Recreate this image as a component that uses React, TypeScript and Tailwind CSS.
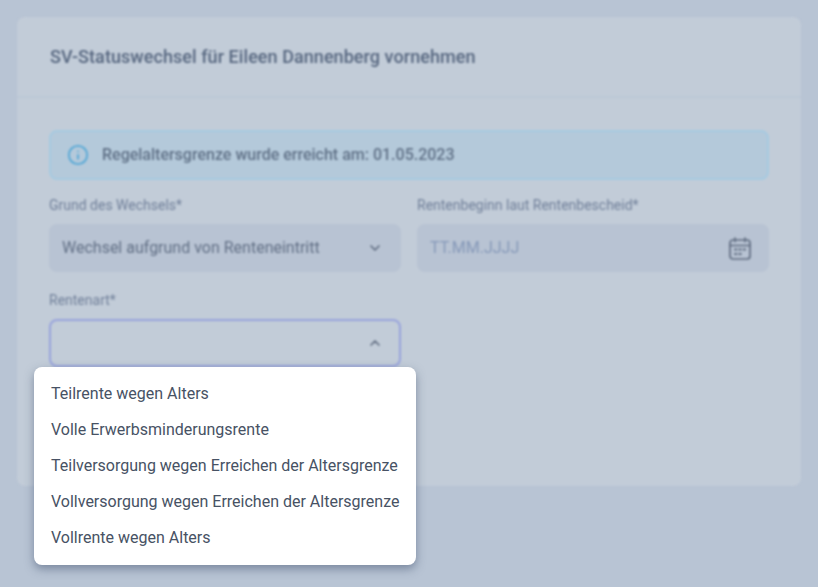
import { ChevronDown, ChevronUp, Info } from 'lucide-react';

const options = [
  'Teilrente wegen Alters',
  'Volle Erwerbsminderungsrente',
  'Teilversorgung wegen Erreichen der Altersgrenze',
  'Vollversorgung wegen Erreichen der Altersgrenze',
  'Vollrente wegen Alters',
];

function CalendarIcon() {
  return (
    <svg viewBox="0 0 22 23" className="h-[23px] w-[22px] text-[#5f6c80]" fill="none" stroke="currentColor" strokeWidth="1.7" strokeLinecap="round">
      <rect x="1" y="3" width="20" height="19" rx="3" />
      <path d="M1 8.5h20M6 1v3.5M16 1v3.5" />
      <path d="M6 12.5h1.5M10.3 12.5h1.5M14.6 12.5h1.5M6 17h1.5M10.3 17h1.5" strokeWidth="2" />
    </svg>
  );
}

export default function App() {
  return (
    <div className="relative h-[587px] w-[818px] overflow-hidden bg-[#b8c4d4] font-['Roboto',sans-serif]">
      {/* blurred page behind the open menu */}
      <div className="h-full w-full p-[17px] blur-[1.2px]">
        <div className="h-[469px] rounded-lg bg-[#c2ccd8]">
          <div className="flex h-[81px] items-center border-b-2 border-[#bcc8d6] px-[33px]">
            <h1 className="text-lg font-medium tracking-[0.06px] text-[#56667f]">
              SV-Statuswechsel für Eileen Dannenberg vornehmen
            </h1>
          </div>

          <div className="px-[32px] pt-[32px]">
            <div className="flex h-[50px] w-[720px] items-center gap-[13px] rounded-lg border-2 border-[#a6cae1] bg-[#b4c9da] pl-[16px]">
              <Info className="h-[22px] w-[22px] text-[#55a8d6]" strokeWidth={2} />
              <span className="text-base font-medium text-[#5f7086]">
                Regelaltersgrenze wurde erreicht am: 01.05.2023
              </span>
            </div>

            <div className="mt-4 grid w-[720px] grid-cols-2 gap-x-4">
              <div>
                <label className="block h-[20px] text-sm leading-[18px] text-[#71809a]">Grund des Wechsels*</label>
                <div className="mt-[8px] flex h-[48px] items-center justify-between rounded-lg bg-[#b8c3d3] pl-[13px] pr-[18px]">
                  <span className="text-base text-[#616f85]">Wechsel aufgrund von Renteneintritt</span>
                  <ChevronDown className="h-4 w-4 text-[#5f6c80]" strokeWidth={2.5} />
                </div>
              </div>
              <div>
                <label className="block h-[20px] text-sm leading-[18px] text-[#71809a]">Rentenbeginn laut Rentenbescheid*</label>
                <div className="mt-[8px] flex h-[48px] items-center justify-between rounded-lg bg-[#b8c3d3] pl-[13px] pr-[18px]">
                  <span className="text-base text-[#8598b8]">TT.MM.JJJJ</span>
                  <CalendarIcon />
                </div>
              </div>
              <div className="mt-[19px]">
                <label className="block h-[20px] text-sm leading-[18px] text-[#71809a]">Rentenart*</label>
                <div className="mt-[8px] flex h-[48px] items-center justify-end rounded-lg border-2 border-[#98a3dc] pr-[16px]">
                  <ChevronUp className="h-4 w-4 text-[#5f6c80]" strokeWidth={2.5} />
                </div>
              </div>
            </div>
          </div>
        </div>
      </div>

      {/* open select menu */}
      <ul className="absolute left-[34px] top-[367px] flex h-[198px] w-[382px] flex-col rounded-lg bg-white py-[9px] shadow-[0_4px_10px_rgba(60,75,105,0.5)]">
        {options.map((option) => (
          <li key={option} className="flex h-9 items-center whitespace-nowrap pl-[17px] text-base text-[#475264]">
            {option}
          </li>
        ))}
      </ul>
    </div>
  );
}
